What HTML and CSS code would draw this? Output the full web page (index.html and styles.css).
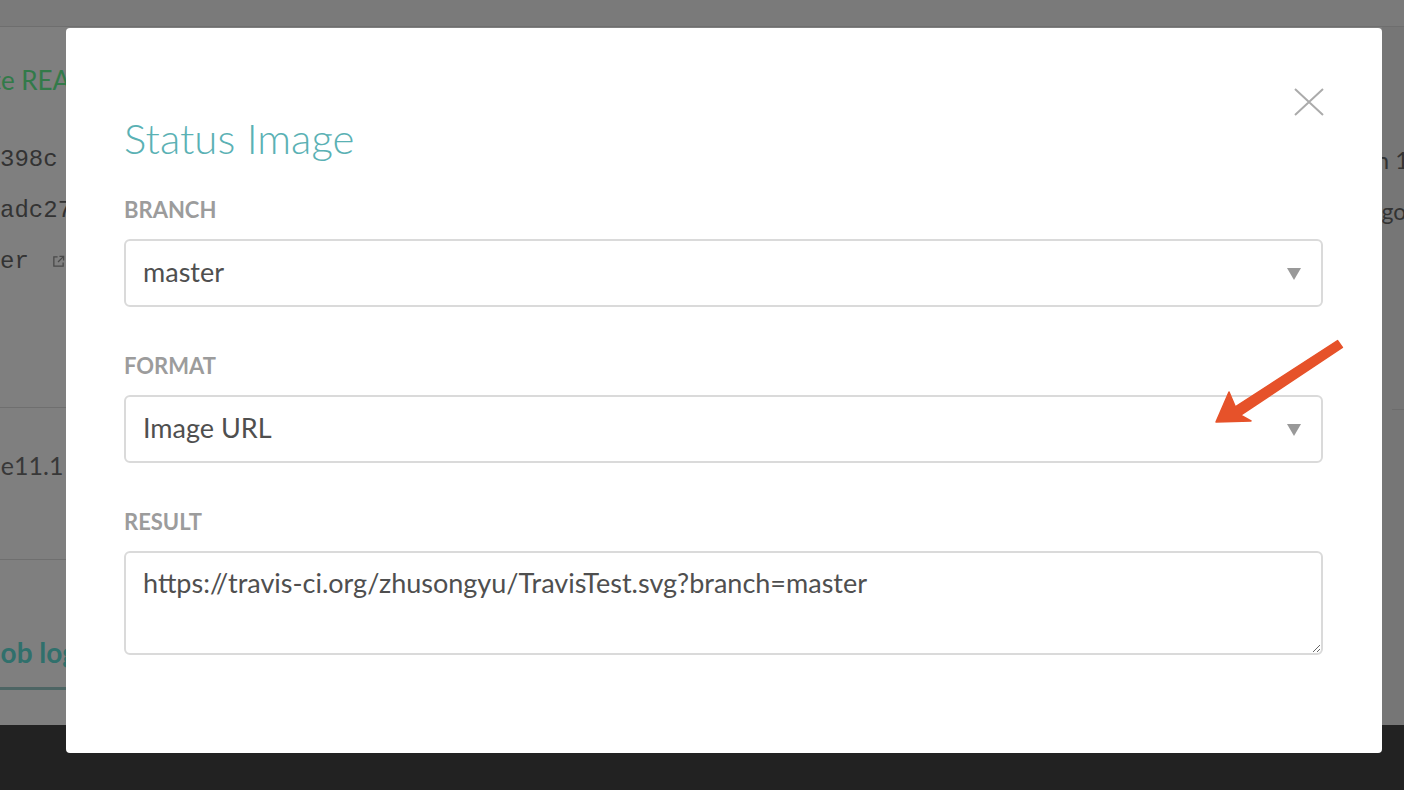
FILE: index.html
```html
<!DOCTYPE html>
<html lang="en">
<head>
<meta charset="utf-8">
<title>Status Image</title>
<link rel="stylesheet" href="styles.css">
</head>
<body>
<div class="page">
  <header class="topbar"></header>
  <div class="main">
    <section class="build">
      <div class="summary">
        <p class="commit-msg">Update README.md</p>
        <div class="meta">
          <div class="meta-row">
            <span class="mono">Commit 5f1398c</span>
            <span class="side-text dur">Ran 1 min 22 sec</span>
          </div>
          <div class="meta-row">
            <span class="mono">Compare 1dadc27..5f1398c</span>
            <span class="side-text ago">2 hours ago</span>
          </div>
          <div class="meta-row">
            <span class="mono branch">Branch master</span>
            <svg class="ext-icon" viewBox="0 0 14 14" width="13" height="13" aria-hidden="true">
              <path d="M6 2H2v10h10V8" fill="none" stroke="#4a4a4a" stroke-width="1.4"/>
              <path d="M8 1.5h4.5V6M12.5 1.5L6.5 7.5" fill="none" stroke="#4a4a4a" stroke-width="1.4"/>
            </svg>
          </div>
        </div>
      </div>
      <div class="config">
        <span class="os">xcode11.1</span>
      </div>
      <div class="tabs">
        <span class="tab">Job log</span>
      </div>
    </section>
    <div class="side-strip"></div>
  </div>
  <footer class="footer"></footer>
</div>

<div class="modal" role="dialog" aria-labelledby="modal-title">
  <button class="close" type="button" aria-label="Close">
    <svg viewBox="0 0 30 28" width="30" height="28" aria-hidden="true">
      <path d="M1 1L29 27M29 1L1 27" stroke="#ababab" stroke-width="2" fill="none"/>
    </svg>
  </button>
  <h2 class="modal-title" id="modal-title">Status Image</h2>
  <div class="field">
    <label class="field-label">BRANCH</label>
    <div class="select"><span>master</span><span class="caret"></span></div>
  </div>
  <div class="field">
    <label class="field-label">FORMAT</label>
    <div class="select"><span>Image URL</span><span class="caret"></span></div>
  </div>
  <div class="field">
    <label class="field-label">RESULT</label>
    <textarea class="result" readonly>https://travis-ci.org/zhusongyu/TravisTest.svg?branch=master</textarea>
  </div>
</div>

<svg class="annotation" width="1404" height="790" viewBox="0 0 1404 790" aria-hidden="true">
  <polygon points="1216,422 1229,392 1235.3,406.8 1337.6,340.6 1342.4,347.4 1240.7,415.2 1251,421" fill="#e6522a" stroke="#e6522a" stroke-width="1.5" stroke-linejoin="round"/>
</svg>
</body>
</html>
```

FILE: styles.css
```css
html, body {
  margin: 0;
  padding: 0;
}
body {
  width: 1404px;
  height: 790px;
  overflow: hidden;
  font-family: Lato, "Liberation Sans", sans-serif;
  background: #222;
}

.page {
  display: flex;
  flex-direction: column;
  height: 790px;
  overflow: hidden;
}
.topbar {
  height: 26px;
  background: #7a7a7a;
  border-bottom: 1px solid #6e6e6e;
  flex: none;
}
.main {
  display: flex;
  height: 698px;
  flex: none;
  background: #767676;
}
.build {
  width: 1382px;
  flex: none;
  background: #7f7f7f;
  display: flex;
  flex-direction: column;
}
.side-strip {
  flex: 1;
  margin-left: 10px;
  height: 382px;
  border-bottom: 1px solid #6c6c6c;
}
.footer {
  flex: 1;
  background: #222;
}

.summary {
  border-bottom: 1px solid #6f6f6f;
  height: 380px;
}
.commit-msg {
  margin: 37px 0 0 -69px;
  font-size: 26px;
  line-height: 32px;
  color: #327a49;
  white-space: nowrap;
}
.meta {
  margin-top: 38px;
}
.meta-row {
  display: flex;
  align-items: center;
  height: 51px;
  white-space: nowrap;
}
.mono {
  font-family: "Liberation Mono", monospace;
  font-size: 24px;
  color: #333;
  margin-left: -144px;
}
.mono.branch {
  margin-left: -158.4px;
}
.ext-icon {
  margin-left: 23px;
}
.side-text {
  margin-left: auto;
  width: 200px;
  flex: none;
  font-size: 24px;
  color: #333;
}
.dur {
  margin-right: -167px;
}
.ago {
  margin-right: -106px;
  font-size: 23px;
}

.config {
  height: 151px;
  border-bottom: 1px solid #6f6f6f;
  display: flex;
  align-items: flex-start;
}
.os {
  font-size: 25px;
  line-height: 30px;
  color: #383838;
  margin: 42px 0 0 -51px;
}

.tabs {
  height: 164px;
  display: flex;
  align-items: flex-start;
}
.tab {
  margin-top: 75px;
  margin-left: -21px;
  font-size: 28px;
  font-weight: 700;
  color: #30706c;
  padding: 0 0 18px 10px;
  width: 200px;
  border-bottom: 3px solid #4d6564;
}

/* modal */
.modal {
  position: fixed;
  top: 28px;
  left: 66px;
  width: 1316px;
  height: 725px;
  box-sizing: border-box;
  padding: 85px 59px 0 58px;
  background: #fff;
  border-radius: 4px;
}
.close {
  position: absolute;
  top: 60px;
  right: 58px;
  width: 30px;
  height: 28px;
  padding: 0;
  border: 0;
  background: transparent;
  display: flex;
}
.modal-title {
  margin: 0 0 34px;
  font-size: 42px;
  font-weight: 300;
  line-height: 50px;
  color: #5ab1b4;
}
.field {
  display: flex;
  flex-direction: column;
  gap: 16px;
  margin-bottom: 46px;
}
.field-label {
  font-size: 22px;
  font-weight: 700;
  line-height: 26px;
  color: #9c9c9c;
}
.select {
  height: 68px;
  box-sizing: border-box;
  border: 2px solid #dadada;
  border-radius: 6px;
  display: flex;
  align-items: center;
  justify-content: space-between;
  padding: 0 20px 0 17px;
  font-size: 27px;
  line-height: 34px;
  color: #4f4f4f;
}
.select span:first-child {
  margin-top: -3px;
}
.caret {
  width: 0;
  height: 0;
  border-left: 7px solid transparent;
  border-right: 7px solid transparent;
  border-top: 12px solid #999;
  margin-top: 2px;
}
.result {
  height: 104px;
  box-sizing: border-box;
  border: 2px solid #dadada;
  border-radius: 6px;
  padding: 13px 17px;
  font-family: Lato, "Liberation Sans", sans-serif;
  font-size: 27px;
  line-height: 34px;
  color: #4f4f4f;
  resize: vertical;
  outline: none;
}

.annotation {
  position: fixed;
  top: 0;
  left: 0;
  pointer-events: none;
}
```
